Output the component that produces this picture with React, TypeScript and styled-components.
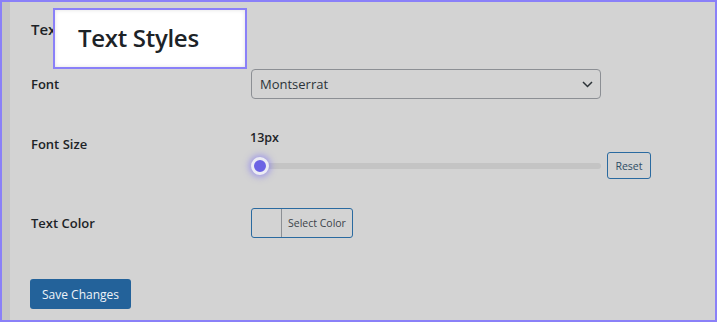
import React from "react";
import styled, { createGlobalStyle } from "styled-components";

const Global = createGlobalStyle`
  html, body { margin: 0; padding: 0; background: #d3d3d3; }
  body { font-family: "Open Sans", "Noto Sans", Arial, sans-serif; color: #1d2327; }
  * { box-sizing: border-box; }
`;

const Frame = styled.div`
  position: relative;
  width: 717px;
  height: 322px;
  border: 2px solid #8a80f8;
  background: #d3d3d3;
  display: flex;
  overflow: hidden;
`;

const SideStrip = styled.div`
  width: 8px;
  flex: none;
  background: #c5c5c5;
`;

const Content = styled.div`
  flex: 1;
  padding: 17px 0 0 21px;
  display: flex;
  flex-direction: column;
`;

const Heading = styled.h2`
  margin: 0;
  font-size: 15px;
  line-height: 20px;
  font-weight: 600;
  color: #1d2327;
`;

const Row = styled.div<{ $top: number; $align?: string }>`
  display: grid;
  grid-template-columns: 220px 1fr;
  align-items: ${(p) => p.$align || "center"};
  margin-top: ${(p) => p.$top}px;
`;

const Label = styled.div<{ $pad?: number }>`
  font-size: 13px;
  font-weight: 600;
  line-height: 20px;
  padding-top: ${(p) => p.$pad || 0}px;
  color: #1d2327;
`;

const SelectWrap = styled.div`
  position: relative;
  width: 350px;
  height: 30px;
`;

const Select = styled.select`
  appearance: none;
  -webkit-appearance: none;
  width: 100%;
  height: 100%;
  border: 1px solid #8c8f94;
  border-radius: 4px;
  background: transparent;
  padding: 0 28px 0 8px;
  font-family: "Open Sans", "Noto Sans", Arial, sans-serif;
  font-size: 13px;
  color: #2c3338;
`;

const Chevron = styled.svg`
  position: absolute;
  right: 8px;
  top: 12px;
  pointer-events: none;
`;

const Field = styled.div`
  display: flex;
  flex-direction: column;
`;

const ValueText = styled.div`
  font-size: 12.5px;
  font-weight: 600;
  line-height: 16px;
  color: #1d2327;
  margin-left: -1px;
`;

const SliderRow = styled.div`
  display: flex;
  align-items: center;
  gap: 6px;
  margin-top: 6px;
`;

const Track = styled.div`
  position: relative;
  width: 350px;
  height: 6px;
  background: #c4c4c4;
  border-radius: 3px;
`;

const Thumb = styled.div`
  position: absolute;
  left: 0;
  top: -6px;
  width: 18px;
  height: 18px;
  border-radius: 50%;
  background: #6c63e4;
  border: 3px solid #ececf4;
  box-shadow: 0 0 6px 2px rgba(120, 108, 245, 0.55);
`;

const OutlineButton = styled.button`
  height: 27px;
  width: 44px;
  padding: 0;
  border: 1px solid #2a6aa0;
  border-radius: 3px;
  background: transparent;
  font-family: "Open Sans", "Noto Sans", Arial, sans-serif;
  font-size: 10.5px;
  color: #2e4d66;
`;

const ColorButton = styled.button`
  display: flex;
  align-items: stretch;
  width: 102px;
  height: 30px;
  padding: 0;
  border: 1px solid #2a6aa0;
  border-radius: 3px;
  background: transparent;
  overflow: hidden;
`;

const Swatch = styled.span`
  width: 30px;
  border-right: 1px solid #8c8f94;
`;

const ColorText = styled.span`
  display: flex;
  align-items: center;
  padding-left: 6px;
  font-family: "Open Sans", "Noto Sans", Arial, sans-serif;
  font-size: 10.5px;
  color: #3c434a;
`;

const PrimaryButton = styled.button`
  align-self: flex-start;
  margin-top: 41px;
  margin-left: -1px;
  height: 30px;
  width: 101px;
  padding: 0;
  border: none;
  border-radius: 3px;
  background: #23629a;
  color: #eef3f8;
  font-family: "Open Sans", "Noto Sans", Arial, sans-serif;
  font-size: 12px;
`;

const Callout = styled.div`
  position: absolute;
  left: 51px;
  top: 6px;
  width: 194px;
  height: 61px;
  border: 2px solid #8a80f8;
  background: #ffffff;
  box-shadow: inset 0 0 4px rgba(0, 0, 0, 0.12);
  display: flex;
  align-items: center;
  padding: 0 0 2px 23px;
  font-size: 24px;
  font-weight: 600;
  color: #1d2327;
  letter-spacing: -0.3px;
`;

export default function App() {
  return (
    <>
      <Global />
      <Frame>
        <SideStrip />
        <Content>
          <Heading>Text Styles</Heading>
          <Row $top={30}>
            <Label>Font</Label>
            <SelectWrap>
              <Select defaultValue="Montserrat">
                <option>Montserrat</option>
              </Select>
              <Chevron width="11" height="7" viewBox="0 0 11 7">
                <path d="M1 1 L5.5 5.5 L10 1" fill="none" stroke="#2c3338" strokeWidth="1.5" />
              </Chevron>
            </SelectWrap>
          </Row>
          <Row $top={31} $align="start">
            <Label $pad={4}>Font Size</Label>
            <Field>
              <ValueText>13px</ValueText>
              <SliderRow>
                <Track>
                  <Thumb />
                </Track>
                <OutlineButton>Reset</OutlineButton>
              </SliderRow>
            </Field>
          </Row>
          <Row $top={29}>
            <Label>Text Color</Label>
            <ColorButton>
              <Swatch />
              <ColorText>Select Color</ColorText>
            </ColorButton>
          </Row>
          <PrimaryButton>Save Changes</PrimaryButton>
        </Content>
        <Callout>Text Styles</Callout>
      </Frame>
    </>
  );
}
